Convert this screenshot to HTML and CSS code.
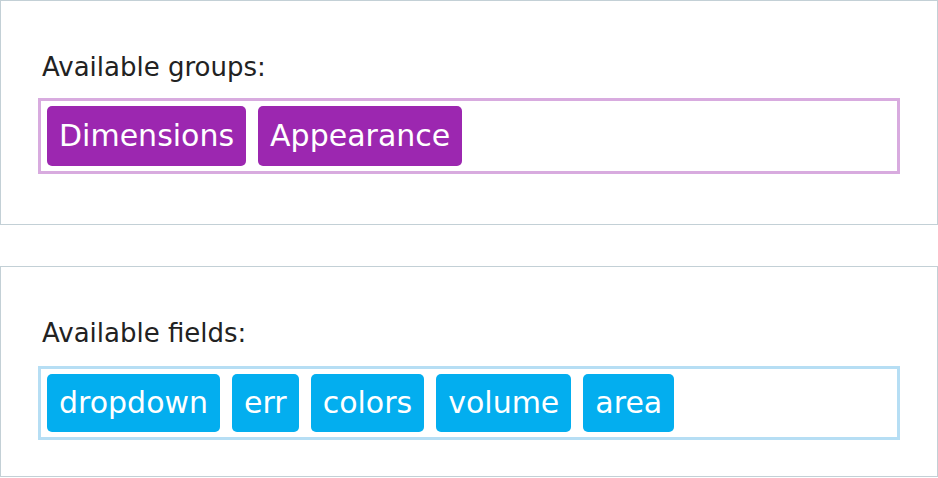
FILE: index.html
```html
<!DOCTYPE html>
<html lang="en">
<head>
<meta charset="utf-8">
<title>Available groups and fields</title>
<link rel="stylesheet" href="styles.css">
</head>
<body>
  <section class="panel panel-groups">
    <div class="panel-label">Available groups:</div>
    <div class="dropzone dropzone-groups">
      <span class="chip chip-group">Dimensions</span>
      <span class="chip chip-group">Appearance</span>
    </div>
  </section>
  <section class="panel panel-fields">
    <div class="panel-label">Available fields:</div>
    <div class="dropzone dropzone-fields">
      <span class="chip chip-field">dropdown</span>
      <span class="chip chip-field">err</span>
      <span class="chip chip-field">colors</span>
      <span class="chip chip-field">volume</span>
      <span class="chip chip-field">area</span>
    </div>
  </section>
</body>
</html>
```
FILE: styles.css
```css
html, body {
  margin: 0;
  padding: 0;
  background: #ffffff;
}

body {
  font-family: "DejaVu Sans", Verdana, sans-serif;
  color: #222222;
  width: 938px;
}

.panel {
  border: 1px solid #c3d0d6;
  padding: 51px 37px 50px;
}

.panel-fields {
  margin-top: 41px;
  padding-bottom: 36px;
}

.panel-label {
  font-size: 26px;
  line-height: 30px;
  margin-left: 4px;
  margin-bottom: 16px;
}

.panel-fields .panel-label {
  margin-bottom: 18px;
}

.dropzone {
  display: flex;
  gap: 12px;
  padding: 5px 6px;
  border: 3px solid;
}

.dropzone-groups {
  border-color: #d8abdf;
}

.dropzone-fields {
  border-color: #b6def4;
}

.chip {
  color: #ffffff;
  font-size: 30px;
  padding: 0 12px;
  border-radius: 5px;
  white-space: nowrap;
}

.chip-group {
  background: #9c27b0;
  line-height: 60px;
}

.chip-field {
  background: #03aeef;
  line-height: 58px;
}
```
